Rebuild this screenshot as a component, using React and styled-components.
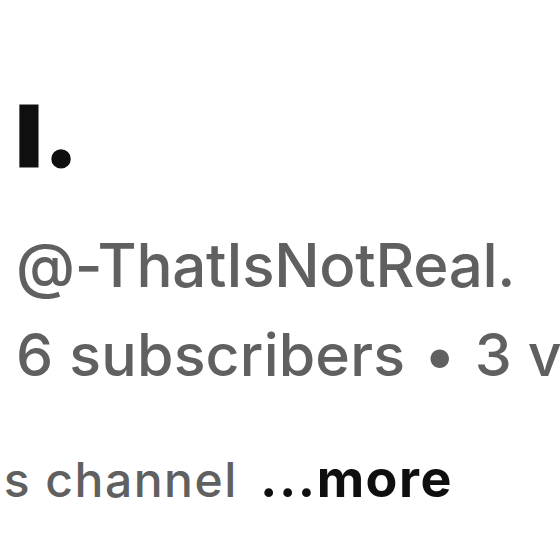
import React from "react";
import styled, { createGlobalStyle } from "styled-components";

const Global = createGlobalStyle`
  html, body { margin: 0; padding: 0; background: #ffffff; }
  body { width: 560px; height: 560px; overflow: hidden; font-family: Inter, Roboto, "Liberation Sans", sans-serif; }
`;

const Page = styled.div`
  width: 560px;
  height: 560px;
  overflow: hidden;
  padding: 96px 0 0 16px;
  box-sizing: border-box;
  display: flex;
  flex-direction: column;
`;

const Title = styled.h1`
  margin: 0 0 0 1px;
  font-size: 82px;
  line-height: 82px;
  font-weight: 900;
  color: #0f0f0f;
  letter-spacing: 5px;
  -webkit-text-stroke: 3px #0f0f0f;
`;

const Meta = styled.div`
  margin-top: ${(p) => p.$gap}px;
  font-size: ${(p) => p.$size}px;
  letter-spacing: ${(p) => p.$track}px;
  line-height: 90px;
  font-weight: 500;
  color: #606060;
  white-space: nowrap;
`;

const Dot = styled.span`
  margin: 0 0.32em;
`;

const Description = styled.div`
  margin-top: 43px;
  margin-left: -366px;
  font-size: 48px;
  letter-spacing: 1.5px;
  line-height: 72px;
  font-weight: 500;
  color: #606060;
  white-space: nowrap;
`;

const More = styled.span`
  margin-left: 8px;
  color: #0f0f0f;
  font-size: 52px;
  font-weight: 700;
  letter-spacing: 1.5px;
`;

export default function App() {
  return (
    <>
      <Global />
      <Page>
        <Title>I.</Title>
        <Meta $size={60} $track={-0.3} $gap={42}>@-ThatIsNotReal.</Meta>
        <Meta $size={59} $track={0.2} $gap={0}>
          6 subscribers<Dot>•</Dot>3 videos
        </Meta>
        <Description>
          More about this channel <More>...more</More>
        </Description>
      </Page>
    </>
  );
}
